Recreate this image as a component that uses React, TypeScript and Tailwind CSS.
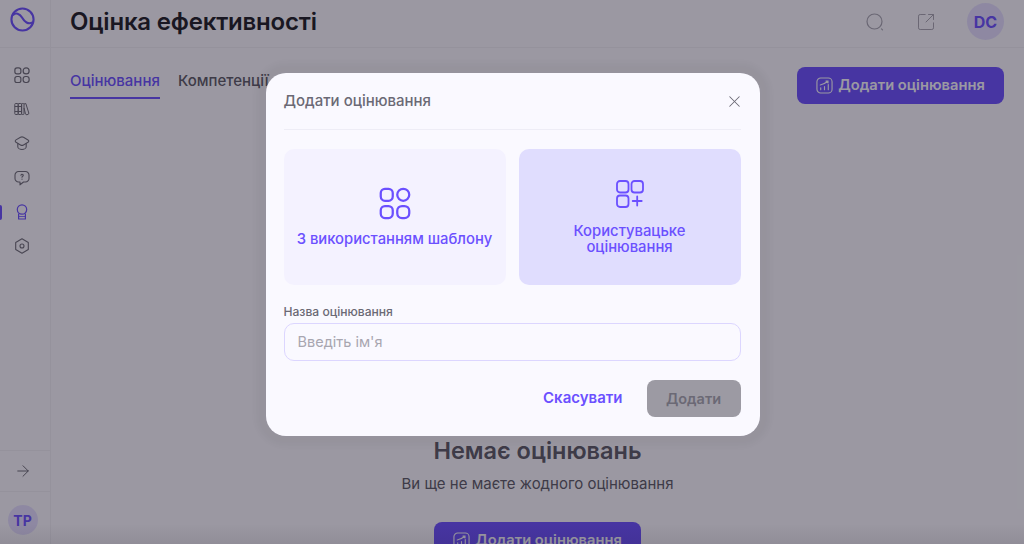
import { ArrowRight, SquareArrowOutUpRight, X } from "lucide-react";

const font = "font-['Inter','Noto_Sans',sans-serif]";

function GridIcon({ className, strokeWidth = 1.6 }: { className?: string; strokeWidth?: number }) {
  return (
    <svg viewBox="0 0 24 24" fill="none" stroke="currentColor" strokeWidth={strokeWidth} className={className}>
      <rect x="2.500" y="2.500" width="8" height="8" rx="2.800" />
      <circle cx="17.500" cy="6.500" r="4" />
      <rect x="2.500" y="14" width="8" height="8" rx="2.800" />
      <rect x="13.500" y="14" width="8" height="8" rx="3.200" />
    </svg>
  );
}

function GridPlusIcon({ className }: { className?: string }) {
  return (
    <svg viewBox="0 0 28 28" fill="none" stroke="currentColor" strokeWidth="1.800" className={className}>
      <rect x="1" y="1" width="11.500" height="11.500" rx="3" />
      <rect x="15.500" y="1" width="11.500" height="11.500" rx="3" />
      <rect x="1" y="15.500" width="11.500" height="11.500" rx="3" />
      <path d="M21.200 16.500v9M16.700 21h9" strokeLinecap="round" />
    </svg>
  );
}

function BooksIcon({ className }: { className?: string }) {
  return (
    <svg viewBox="0 0 16 16" fill="none" stroke="currentColor" strokeWidth="1" className={className}>
      <rect x="0.800" y="2.500" width="3.400" height="11" rx="0.800" />
      <rect x="4.200" y="2.500" width="3.400" height="11" rx="0.800" />
      <rect x="7.600" y="2.500" width="2.400" height="11" rx="0.800" />
      <path d="M0.800 5.500h6.800M0.800 10.500h6.800" />
      <path d="M10 3l1.800-.5 3 9.500a1.200 1.200 0 0 1-.8 1.400l-1 .3a1.200 1.200 0 0 1-1.500-.8L10 7" />
    </svg>
  );
}

function CapIcon({ className }: { className?: string }) {
  return (
    <svg viewBox="0 0 16 16" fill="none" stroke="currentColor" strokeWidth="1.100" strokeLinejoin="round" className={className}>
      <path d="M6.500 2.300a3 3 0 0 1 3 0l4.500 2.600c1 .6 1 1.800 0 2.400L9.500 9.900a3 3 0 0 1-3 0L2 7.300c-1-.6-1-1.800 0-2.400z" />
      <path d="M3.800 8.500v3.200c0 1.500 2 2.800 4.200 2.800s4.200-1.300 4.200-2.800V8.500" />
    </svg>
  );
}

function QuestionIcon({ className }: { className?: string }) {
  return (
    <svg viewBox="0 0 16 16" fill="none" stroke="currentColor" strokeWidth="1.100" strokeLinejoin="round" className={className}>
      <path d="M4.500 1.500h7a3.500 3.500 0 0 1 3.500 3.500v3.500a3.500 3.500 0 0 1-3.500 3.500h-2L6 14.800V12H4.500A3.500 3.500 0 0 1 1 8.500V5a3.500 3.500 0 0 1 3.500-3.500z" />
      <path d="M6.900 5.300c.2-.7.700-1 1.200-1 .7 0 1.200.5 1.200 1 0 .9-1.300 1-1.300 1.900" strokeLinecap="round" />
      <path d="M8 9v.2" strokeLinecap="round" />
    </svg>
  );
}

function AwardIcon({ className }: { className?: string }) {
  return (
    <svg viewBox="0 0 16 16" fill="none" stroke="currentColor" strokeWidth="1.200" strokeLinejoin="round" className={className}>
      <circle cx="8" cy="5.500" r="4.700" />
      <path d="M4.600 9.500v5.500h6.800V9.500" />
      <path d="M4.600 12.500h6.800" strokeWidth="0.800" />
    </svg>
  );
}

function HexIcon({ className }: { className?: string }) {
  return (
    <svg viewBox="0 0 16 16" fill="none" stroke="currentColor" strokeWidth="1.100" strokeLinejoin="round" className={className}>
      <path d="M8 .8l6.300 3.600v7.200L8 15.200 1.700 11.600V4.400z" />
      <circle cx="8" cy="8" r="2" />
    </svg>
  );
}

function ChartBoxIcon({ className }: { className?: string }) {
  return (
    <svg viewBox="0 0 18 18" fill="none" stroke="currentColor" strokeWidth="1.200" strokeLinecap="round" className={className}>
      <rect x="1" y="1" width="16" height="16" rx="4" />
      <path d="M5 13.500v-2M9 13.500v-3.500M13 13.500V8" />
      <path d="M4.500 8.500C7 8 10 6.500 12.500 4.500M10.500 4.200h2.200v2.200" />
    </svg>
  );
}

function LogoIcon({ className }: { className?: string }) {
  return (
    <svg viewBox="0 0 26 26" fill="none" stroke="currentColor" strokeWidth="2.200" className={className}>
      <circle cx="13" cy="13" r="11.500" />
      <path d="M3 8.500C6 5.500 10 6.500 12.500 11C15 15.500 19 18.500 23.500 16" />
    </svg>
  );
}

function SearchIcon({ className }: { className?: string }) {
  return (
    <svg viewBox="0 0 18 18" fill="none" stroke="currentColor" strokeWidth="1.200" strokeLinecap="round" className={className}>
      <circle cx="8.500" cy="8.500" r="7.500" />
      <path d="M15.500 15.800l1 1" />
    </svg>
  );
}

const navItems = [
  { icon: GridIcon, cls: "h-[18px] w-[18px]" },
  { icon: BooksIcon, cls: "h-[16px] w-[16px]" },
  { icon: CapIcon, cls: "h-[16px] w-[16px]" },
  { icon: QuestionIcon, cls: "h-[16px] w-[16px]" },
  { icon: AwardIcon, cls: "h-[16px] w-[16px] text-[#6b50ff]", active: true },
  { icon: HexIcon, cls: "h-[16px] w-[16px]" },
];

function AddButton({ className }: { className?: string }) {
  return (
    <button className={`flex h-[37px] w-[207px] items-center justify-center gap-[5px] rounded-lg bg-[#6b50ff] text-[14.7px] font-semibold text-[#fafaff] ${className ?? ""}`}>
      <ChartBoxIcon className="h-[17px] w-[17px]" />
      Додати оцінювання
    </button>
  );
}

export default function App() {
  return (
    <div className={`relative flex h-screen w-full overflow-hidden bg-[#faf9ff] ${font}`}>
      {/* Sidebar */}
      <aside className="flex w-[51px] shrink-0 flex-col border-r border-[#f0eff5]">
        <div className="flex h-[48px] shrink-0 items-center justify-center border-b border-[#f0eff5] pr-[5px] text-[#6b50ff]">
          <LogoIcon className="h-[25px] w-[25px] -translate-y-[4px]" />
        </div>
        <nav className="mt-[10px] flex flex-col">
          {navItems.map((item, i) => (
            <div key={i} className="relative flex h-[34.200px] items-center justify-center pr-[7px] text-[#6e6c78]">
              {item.active && <span className="absolute left-0 top-[10px] h-[15px] w-[2px] rounded-r bg-[#6b50ff]" />}
              <item.icon className={item.cls} />
            </div>
          ))}
        </nav>
        <div className="mt-auto flex h-[42px] items-center justify-center border-y border-[#f0eff5] pr-[5px] text-[#5c5a66]">
          <ArrowRight className="h-[18px] w-[18px]" strokeWidth={1.200} />
        </div>
        <div className="flex h-[52px] items-center justify-center pr-[5px] pt-[4px]">
          <div className="flex h-[30px] w-[30px] items-center justify-center rounded-full bg-[#e4deff] text-[14px] font-bold text-[#6b50ff]">
            TP
          </div>
        </div>
      </aside>

      {/* Main */}
      <main className="flex min-w-0 flex-1 flex-col">
        <header className="flex h-[48px] shrink-0 items-center justify-between border-b border-[#f0eff5] pl-[19px] pr-[20px]">
          <h1 className="-translate-y-[2px] text-[24px] font-semibold tracking-[-0.2px] text-[#1e1d26]">Оцінка ефективності</h1>
          <div className="flex -translate-y-[2px] items-center">
            <SearchIcon className="mr-[32px] h-[18px] w-[18px] text-[#a8a6b2]" />
            <SquareArrowOutUpRight className="mr-[31px] h-[20px] w-[20px] text-[#a8a6b2]" strokeWidth={1.200} />
            <div className="flex h-[37px] w-[37px] items-center justify-center rounded-full bg-[#e4deff] text-[16px] font-bold text-[#6b50ff]">
              DC
            </div>
          </div>
        </header>

        <div className="flex items-start justify-between pl-[19px] pr-[20px] pt-[19px]">
          <div className="flex gap-[18px] text-[15px] font-medium">
            <span className="h-[32px] w-[90px] whitespace-nowrap border-b-2 border-[#6b50ff] pt-[3px] text-[#6b50ff]">Оцінювання</span>
            <span className="pt-[3px] text-[#5c5a66]">Компетенції</span>
          </div>
          <AddButton />
        </div>

        <div className="mt-[332px] flex flex-col items-center">
          <h2 className="text-[23.500px] font-semibold leading-[30px] text-[#5c5a66]">Немає оцінювань</h2>
          <p className="mt-[8px] text-[15px] leading-[20px] text-[#5c5a66]">Ви ще не маєте жодного оцінювання</p>
          <AddButton className="mt-[28px] shrink-0" />
        </div>
      </main>

      {/* Modal overlay */}
      <div className="absolute inset-0 flex justify-center bg-[rgba(20,15,30,0.41)] pl-[1px] pt-[73px]">
        <div className="flex h-[363px] w-[494px] flex-col rounded-[20px] bg-[#faf9ff] pl-[18px] pr-[19px] shadow-[0_0_6px_10px_rgba(20,15,30,0.035)]">
          <div className="flex h-[57px] shrink-0 items-center justify-between border-b border-[#eeedf6]">
            <span className="text-[15px] font-medium text-[#6b6975]">Додати оцінювання</span>
            <X className="-mr-[3px] h-[19px] w-[19px] text-[#6b6975]" strokeWidth={1.300} />
          </div>
          <div className="mt-[19px] grid h-[136px] shrink-0 grid-cols-2 gap-[13px]">
            <div className="flex flex-col items-center justify-center rounded-[10px] bg-[#f4f2ff] pb-[2px] text-[#6b50ff]">
              <GridIcon className="h-[36px] w-[36px]" strokeWidth={1.500} />
              <span className="mt-[10px] text-[14.800px] font-medium leading-[16px]">З використанням шаблону</span>
            </div>
            <div className="flex flex-col items-center justify-center rounded-[10px] bg-[#e0ddfe] text-[#6b50ff]">
              <GridPlusIcon className="h-[28px] w-[28px]" />
              <span className="mt-[15px] text-center text-[14.800px] font-medium leading-[16px]">
                Користувацьке
                <br />
                оцінювання
              </span>
            </div>
          </div>
          <label className="mt-[19px] text-[12.100px] font-medium leading-[15px] text-[#6b6975]">Назва оцінювання</label>
          <div className="mt-[4px] flex h-[38px] shrink-0 items-center rounded-[10px] border border-[#dcd6ff] px-[13px] text-[14.500px] text-[#a8a6b0]">
            Введіть ім'я
          </div>
          <div className="mt-[19px] flex items-center justify-end gap-[24px]">
            <button className="text-[15px] font-semibold text-[#6b50ff]">Скасувати</button>
            <button className="h-[37px] w-[94px] rounded-lg bg-[#9c9aa3] text-[14.500px] font-semibold text-[#6b6975]">Додати</button>
          </div>
        </div>
      </div>

      {/* bottom shade of the captured page */}
      <div className="absolute inset-x-0 bottom-0 h-[20px] bg-gradient-to-t from-[rgba(20,15,30,0.08)] to-transparent" />
    </div>
  );
}
